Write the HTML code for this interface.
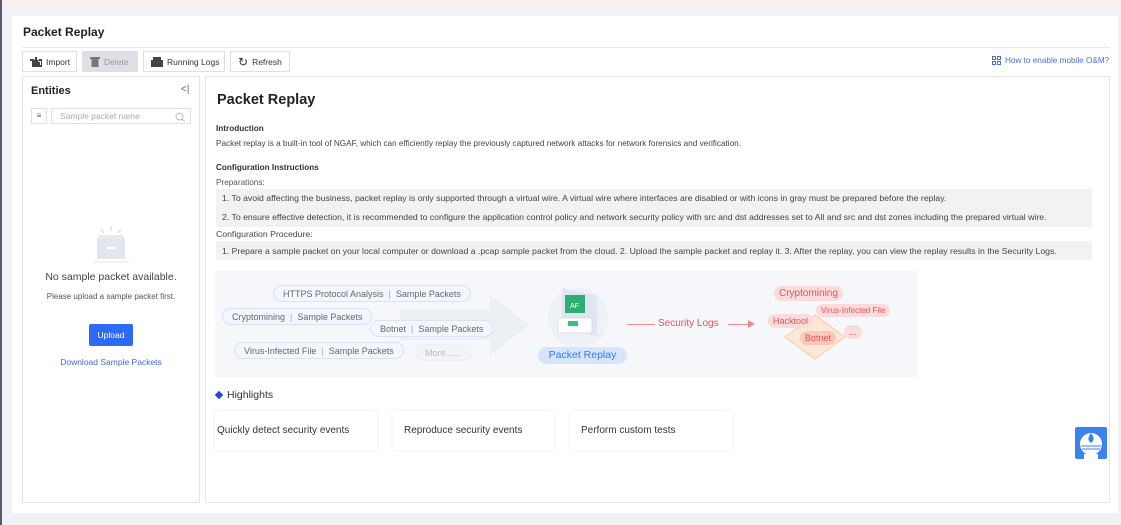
<!DOCTYPE html>
<html><head><meta charset="utf-8"><style>
*{box-sizing:border-box;margin:0;padding:0}
body{width:1121px;height:525px;background:#f1f2f6;font-family:"Liberation Sans",sans-serif;position:relative;overflow:hidden;color:#333}
.a{position:absolute}
.btn{position:absolute;top:51px;height:21px;border:1px solid #dcdfe6;background:#fff;font-size:8.5px;color:#333;display:flex;align-items:center;padding-left:7px;gap:4px;white-space:nowrap}
.t9{font-size:8.2px;color:#333;white-space:nowrap}
.gb{position:absolute;left:216px;width:876px;background:#f2f2f2;font-size:8.7px;color:#444;padding-left:6px;display:flex;align-items:center;white-space:nowrap}
.pill{position:absolute;height:17px;border:1px solid #d8e3f5;border-radius:9px;background:#f3f7fd;font-size:9px;color:#666;display:flex;align-items:center;padding:0 9px;white-space:nowrap}
.pill i{font-style:normal;color:#aaa;margin:0 5px}
.rp{position:absolute;background:#fbdcdc;color:#e05555;border-radius:8px;font-size:9px;padding:2px 5px;white-space:nowrap}
.card{position:absolute;top:411px;height:39px;background:#fff;box-shadow:0 0 4px rgba(0,0,0,.08);font-size:10px;color:#333;padding-left:2px;display:flex;align-items:center}
</style></head><body>
<div class="a" style="left:0;top:0;width:1121px;height:5px;background:#fdeeee"></div>
<div class="a" style="left:0;top:0;width:2px;height:525px;background:#555a6e"></div>
<div class="a" style="left:12px;top:16px;width:1106px;height:497px;background:#fff"></div>
<div class="a" style="left:23px;top:25px;font-size:12px;font-weight:bold;color:#222">Packet Replay</div>
<div class="a" style="left:22px;top:47px;width:1088px;height:1px;background:#eaeaea"></div>
<div class="btn" style="left:22px;width:55px"><svg width="12" height="10"><path d="M0 3h3v6h9v-6h-3" fill="none" stroke="#444" stroke-width="2"/><path d="M6 0v5M3.5 3l2.5 3 2.5-3" stroke="#444" stroke-width="2" fill="none"/><rect x="2" y="5" width="8" height="5" fill="#444"/></svg>Import</div>
<div class="btn" style="left:82px;width:56px;background:#dde0e6;border-color:#dde0e6;color:#999"><svg width="10" height="11"><rect x="0" y="1" width="10" height="2" fill="#777"/><rect x="1.5" y="3" width="7" height="8" fill="#777"/></svg>Delete</div>
<div class="btn" style="left:143px;width:82px"><svg width="12" height="10"><rect x="2" y="0" width="8" height="3" fill="#444"/><rect x="0" y="3" width="12" height="7" fill="#444"/></svg>Running Logs</div>
<div class="btn" style="left:230px;width:60px"><span style="font-size:12px;color:#333;line-height:10px">&#8635;</span>Refresh</div>
<div class="a" style="left:992px;top:56px;font-size:8.2px;color:#4a6ee0;display:flex;gap:4px;align-items:center;white-space:nowrap"><svg width="9" height="9"><g fill="none" stroke="#4a6ee0" stroke-width="1"><rect x=".5" y=".5" width="3" height="3"/><rect x="5.5" y=".5" width="3" height="3"/><rect x=".5" y="5.5" width="3" height="3"/><rect x="5.5" y="5.5" width="3" height="3"/></g></svg>How to enable mobile O&amp;M?</div>
<!-- left panel -->
<div class="a" style="left:22px;top:76px;width:178px;height:427px;border:1px solid #e4e4e4"></div>
<div class="a" style="left:31px;top:85px;font-size:11px;font-weight:bold;color:#222">Entities</div>
<div class="a" style="left:181px;top:84px;font-size:10px;color:#666">&lt;|</div>
<div class="a" style="left:31px;top:108px;width:16px;height:16px;border:1px solid #dcdfe6;font-size:8px;text-align:center;line-height:14px;color:#555">&#8801;</div>
<div class="a" style="left:51px;top:108px;width:140px;height:16px;border:1px solid #dcdfe6;font-size:8.5px;color:#aaa;padding-left:8px;line-height:14px">Sample packet name<svg class="a" style="right:5px;top:3px" width="10" height="10"><circle cx="4.5" cy="4.5" r="3.5" fill="none" stroke="#bbb"/><path d="M7 7l3 3" stroke="#bbb"/></svg></div>
<svg class="a" style="left:93px;top:226px" width="36" height="38"><g stroke="#dfe2ea" stroke-width="1.5"><path d="M18 0v5M8 3l3 4M28 3l-3 4"/></g><path d="M4 13h28l-2 -4H6z" fill="#e8eaf0"/><rect x="4" y="13" width="28" height="20" fill="#e3e6ee"/><rect x="14" y="21" width="8" height="2" fill="#fff"/><rect x="0" y="35" width="36" height="2" fill="#f2f3f6"/></svg>
<div class="a" style="left:22px;width:178px;top:271px;text-align:center;font-size:10.5px;color:#444">No sample packet available.</div>
<div class="a" style="left:22px;width:178px;top:292px;text-align:center;font-size:8px;color:#555">Please upload a sample packet first.</div>
<div class="a" style="left:89px;top:324px;width:44px;height:22px;background:#2c6bf5;border-radius:2px;color:#fff;font-size:8.5px;text-align:center;line-height:22px">Upload</div>
<div class="a" style="left:22px;width:178px;top:357px;text-align:center;font-size:8.5px;color:#3f6ad8">Download Sample Packets</div>
<!-- right panel -->
<div class="a" style="left:205px;top:76px;width:905px;height:427px;border:1px solid #e4e4e4"></div>
<div class="a" style="left:217px;top:92px;font-size:14.5px;font-weight:bold;color:#222">Packet Replay</div>
<div class="a t9" style="left:216px;top:124px;font-weight:bold">Introduction</div>
<div class="a t9" style="left:216px;top:139px;color:#444">Packet replay is a built-in tool of NGAF, which can efficiently replay the previously captured network attacks for network forensics and verification.</div>
<div class="a t9" style="left:216px;top:163px;font-weight:bold">Configuration Instructions</div>
<div class="a t9" style="left:216px;top:178px;color:#555">Preparations:</div>
<div class="gb" style="top:189px;height:18px">1. To avoid affecting the business, packet replay is only supported through a virtual wire. A virtual wire where interfaces are disabled or with icons in gray must be prepared before the replay.</div>
<div class="gb" style="top:207px;height:20px">2. To ensure effective detection, it is recommended to configure the application control policy and network security policy with src and dst addresses set to All and src and dst zones including the prepared virtual wire.</div>
<div class="a t9" style="left:216px;top:229px;color:#444;font-size:8.7px">Configuration Procedure:</div>
<div class="gb" style="top:241px;height:19px">1. Prepare a sample packet on your local computer or download a .pcap sample packet from the cloud. 2. Upload the sample packet and replay it. 3. After the replay, you can view the replay results in the Security Logs.</div>
<!-- illustration -->
<div class="a" style="left:215px;top:271px;width:703px;height:106px;background:#f5f7fa"></div>
<svg class="a" style="left:400px;top:290px" width="140" height="70"><path d="M0 20h90l0-15 40 30-40 30v-15H0z" fill="#eceff4"/></svg>
<div class="pill" style="left:273px;top:285px">HTTPS Protocol Analysis<i>|</i>Sample Packets</div>
<div class="pill" style="left:222px;top:308px">Cryptomining<i>|</i>Sample Packets</div>
<div class="pill" style="left:370px;top:320px">Botnet<i>|</i>Sample Packets</div>
<div class="pill" style="left:234px;top:342px">Virus-Infected File<i>|</i>Sample Packets</div>
<div class="pill" style="left:415px;top:344px;color:#bbb;background:#f2f4f8;border-color:#eceff4">More......</div>
<svg class="a" style="left:540px;top:283px" width="70" height="65"><circle cx="38" cy="35" r="30" fill="#eef1f6"/><path d="M22 5l35 8v40l-35-8z" fill="#dfe6f2"/><rect x="25" y="12" width="20" height="18" fill="#2fae74"/><text x="30" y="25" font-size="7" fill="#fff" font-family="Liberation Sans">AF</text><path d="M18 35h34v15H18z" fill="#fff" stroke="#dde"/><rect x="28" y="38" width="10" height="5" fill="#3bbf85"/></svg>
<div class="a" style="left:538px;top:347px;width:89px;height:17px;background:#d6e5fb;border-radius:9px;color:#3a78e8;font-size:10.5px;text-align:center;line-height:17px">Packet Replay</div>
<div class="a" style="left:627px;top:324px;width:28px;height:1px;background:#ee8a8a"></div>
<div class="a" style="left:658px;top:318px;font-size:10px;color:#e05555">Security Logs</div>
<div class="a" style="left:728px;top:324px;width:22px;height:1px;background:#ee8a8a"></div>
<div class="a" style="left:748px;top:320px;width:0;height:0;border-left:7px solid #ee8a8a;border-top:4px solid transparent;border-bottom:4px solid transparent"></div>
<svg class="a" style="left:780px;top:310px" width="70" height="55"><path d="M35 5l30 22-30 22-30-22z" fill="#fde8d8" stroke="#f9c9a8"/></svg>
<div class="rp" style="left:774px;top:286px;font-size:10px">Cryptomining</div>
<div class="rp" style="left:816px;top:304px;font-size:8px">Virus-Infected File</div>
<div class="rp" style="left:768px;top:314px">Hacktool</div>
<div class="rp" style="left:800px;top:331px;background:#f9c8b8">Botnet</div>
<div class="rp" style="left:844px;top:325px;border-radius:10px">...</div>
<!-- highlights -->
<div class="a" style="left:216px;top:392px;width:6px;height:6px;background:#2347e0;transform:rotate(45deg)"></div>
<div class="a" style="left:227px;top:389px;font-size:10.5px;color:#333">Highlights</div>
<div class="card" style="left:215px;width:162px">Quickly detect security events</div>
<div class="card" style="left:393px;width:161px;padding-left:11px">Reproduce security events</div>
<div class="card" style="left:570px;width:162px;padding-left:11px">Perform custom tests</div>
<!-- float icon -->
<div class="a" style="left:1075px;top:427px;width:32px;height:32px;background:#3b82ee;border-radius:2px;overflow:hidden"><svg width="32" height="32"><circle cx="16" cy="17" r="11" fill="#fff"/><path d="M16 6c-3 4-4 7 0 10 4-3 3-6 0-10z" fill="#3b82ee"/><path d="M6 19h20M7 22h18" stroke="#3b82ee" stroke-width="1"/><rect x="9" y="27" width="14" height="5" fill="#fff"/></svg></div>
</body></html>
